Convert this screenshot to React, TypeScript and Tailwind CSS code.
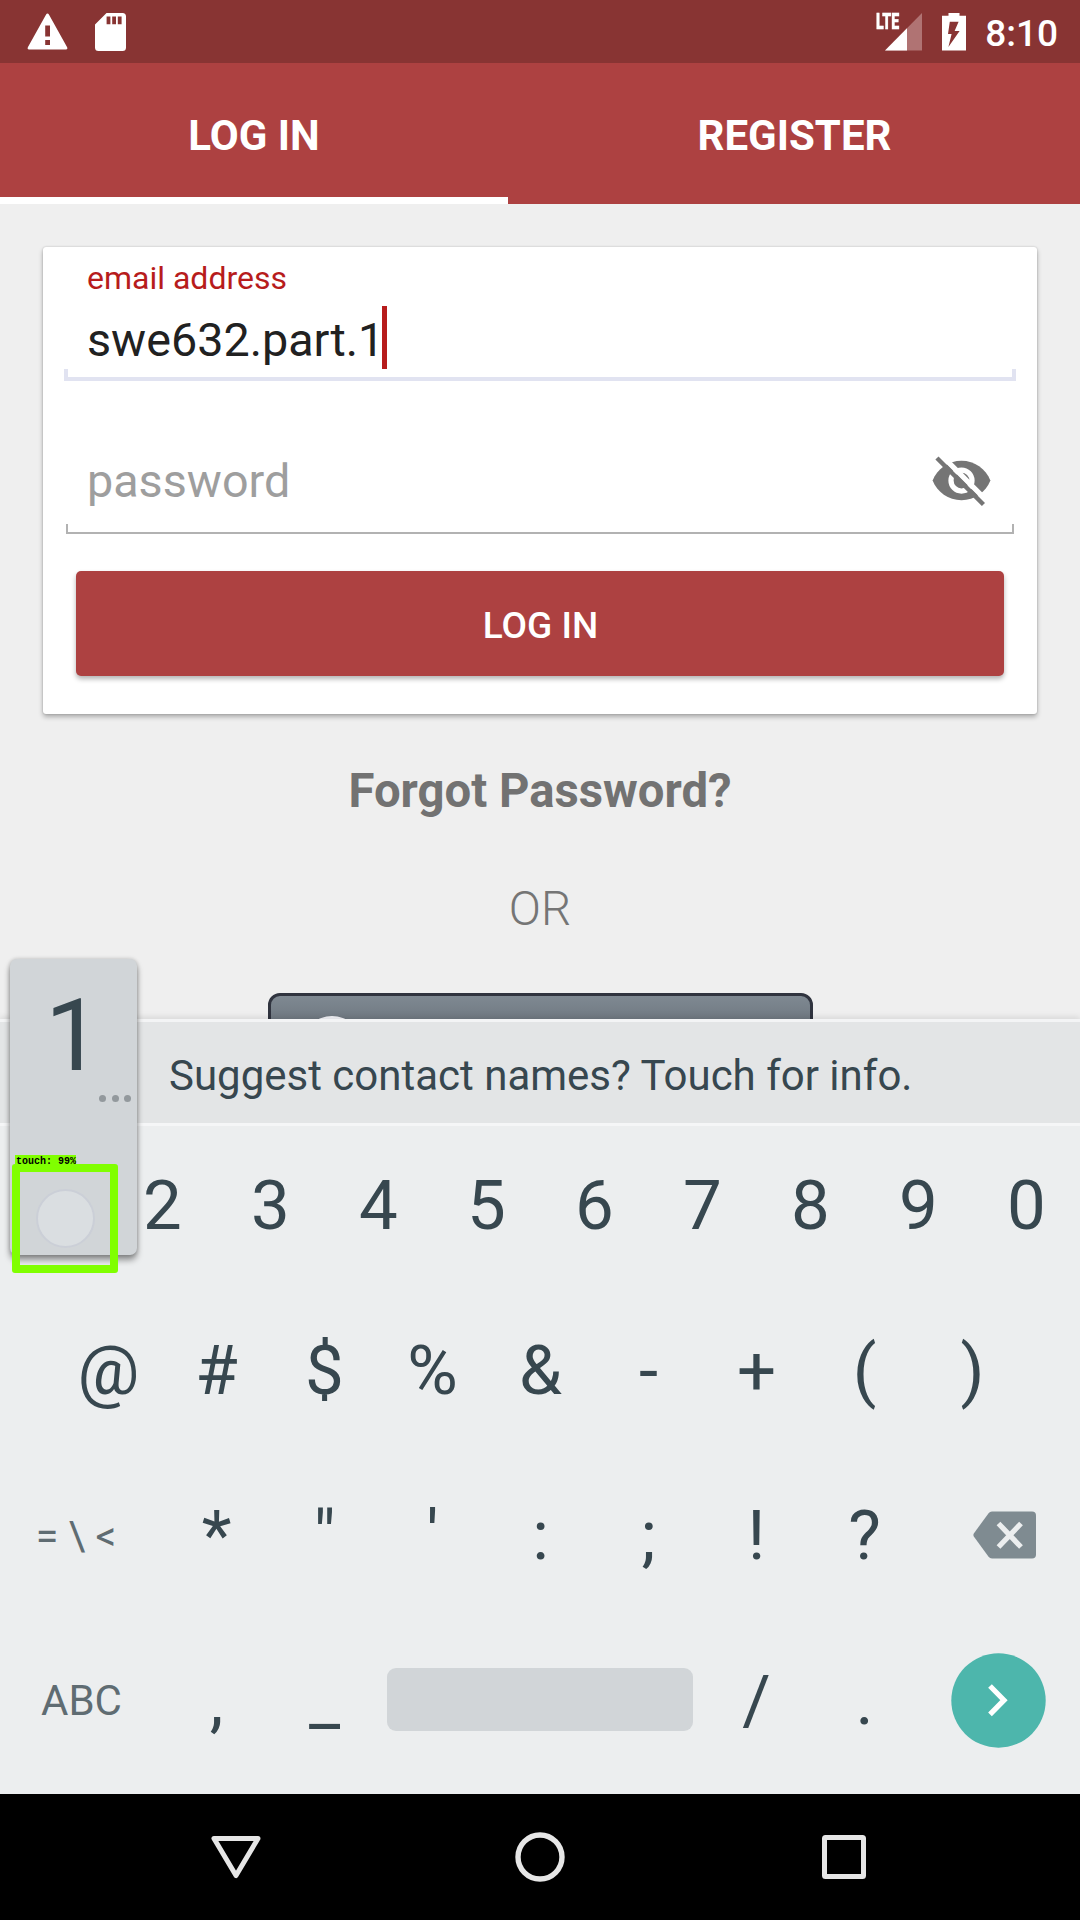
import React from "react";

const digits = ["1", "2", "3", "4", "5", "6", "7", "8", "9", "0"];
const symbols = ["@", "#", "$", "%", "&", "-", "+", "(", ")"];
const punctuation = ["*", '"', "'", ":", ";", "!", "?"];

function Key({ label }: { label: string }) {
  return (
    <button className="flex w-[108px] items-center justify-center pl-px text-[69px] leading-[80px] text-[#37474f]">
      {label}
    </button>
  );
}

function StatusBar() {
  return (
    <header className="flex h-[63px] shrink-0 items-center bg-[#883433] text-white">
      <svg className="ml-[27px] h-[37px] w-[41px]" viewBox="0 0 41 37" fill="currentColor">
        <path
          fillRule="evenodd"
          d="M20.5 .6c.6 0 1 .3 1.400 .9L40 34c.8 1.600.3 2.400-1 2.400H2C.7 36.400.2 35.600 1 34L19.100 1.500c.4-.6.8-.9 1.400-.9ZM18.200 12.500v11h4.800v-11Zm0 14.500v5h4.800v-5Z"
        />
      </svg>
      <svg className="ml-[27px] h-[38px] w-[31px]" viewBox="0 0 31 38" fill="currentColor">
        <path
          fillRule="evenodd"
          d="M11.500 0H27.500Q31 0 31 3.500V34.500Q31 38 27.500 38H3.500Q0 38 0 34.500V11.500ZM11.600 3.500v7.800h3.800V3.500Zm5.600 0v7.800h3.800V3.500Zm5.600 0v7.800h3.800V3.500Z"
        />
      </svg>
      <div className="relative ml-auto h-[38px] w-[46px]">
        <svg className="h-[38px] w-[46px]" viewBox="0 0 46 38">
          <path d="M46 0V37.500H9Z" fill="#b07373" />
          <path d="M31 15.200V37.500H9Z" fill="#fff" />
        </svg>
        <span className="absolute left-0 top-0 origin-left scale-x-[0.63] text-[22.500px] font-black leading-[17px] [-webkit-text-stroke:0.500px_white]">
          LTE
        </span>
      </div>
      <svg className="ml-[20px] h-[38px] w-[24px]" viewBox="0 0 24 38" fill="currentColor">
        <path
          fillRule="evenodd"
          d="M6.500 0h11v2.800H24V37.500H0V2.800H6.500ZM7.800 8.800L6 21h3.600L6.400 34 17.600 18h-5l4-9.200Z"
        />
      </svg>
      <span className="ml-[19px] mr-[22px] mt-[4px] text-[37px] font-medium leading-[44px]">8:10</span>
    </header>
  );
}

function Tabs() {
  return (
    <nav className="flex h-[141px] shrink-0 bg-[#ad4141] text-[42px] font-bold leading-[48px] text-white">
      <button className="flex w-[508px] items-center justify-center border-b-[7px] border-white pt-[11px]">
        LOG IN
      </button>
      <button className="flex w-[572px] items-center justify-center pl-px pt-[4px]">REGISTER</button>
    </nav>
  );
}

function HiddenEye() {
  return (
    <svg className="h-[63px] w-[63px]" viewBox="0 0 24 24">
      <mask id="eye-cut">
        <rect width="24" height="24" fill="#fff" />
        <circle cx="12" cy="12" r="4" fill="none" stroke="#000" strokeWidth="2" />
        <path d="M2.900 .95L23 21.050" stroke="#000" strokeWidth="2" />
      </mask>
      <path
        mask="url(#eye-cut)"
        fill="#757575"
        d="M12 4.500C7 4.500 2.730 7.610 1 12c1.730 4.390 6 7.500 11 7.500s9.270-3.110 11-7.500c-1.730-4.390-6-7.500-11-7.500z"
      />
      <path d="M2.640 3.440L20.360 21.160" stroke="#757575" strokeWidth="1.700" />
    </svg>
  );
}

function LoginCard() {
  return (
    <section className="mx-[43px] mt-[43px] h-[467px] shrink-0 rounded-[3px] bg-white px-[21px] pt-[13px] shadow-[0_0_2px_rgba(0,0,0,0.22),0_3px_5px_rgba(0,0,0,0.28)]">
      <label className="block pl-[23px] text-[32px] leading-[36px] text-[#b71c1c]">email address</label>
      <div className="mt-[10px] flex h-[63px] items-center pl-[23px]">
        <span className="w-[295px] whitespace-nowrap pt-[5px] text-[46.700px] leading-[56px] text-[#212121]">
          swe632.part.1
        </span>
        <span className="h-[63px] w-[5px] bg-[#b71c1c]" />
      </div>
      <div className="h-[12px] border-x-4 border-b-4 border-[#e1e3f1]" />
      <div className="mt-[55px] flex h-[88px] items-center justify-between pl-[23px] pr-[23px]">
        <span className="pt-[2px] text-[46.700px] leading-[56px] text-[#9e9e9e]">password</span>
        <HiddenEye />
      </div>
      <div className="mx-[2px] h-[10px] border-x-2 border-b-2 border-[#b2b2b2]" />
      <button className="mx-[12px] mt-[37px] flex h-[105px] w-[928px] items-center justify-center rounded-[5px] bg-[#ad4141] pl-px pt-[5px] text-[37px] font-medium leading-[44px] text-white shadow-[0_3px_5px_rgba(0,0,0,0.3)]">
        LOG IN
      </button>
    </section>
  );
}

function SocialButton() {
  return (
    <div className="mx-auto mt-[56px] h-[120px] w-[545px] shrink-0 overflow-hidden rounded-[12px] border-[3px] border-[#30343f] bg-linear-to-b from-[#7f8992] to-[#3b4148]">
      <div className="ml-[31px] mt-[20px] h-[60px] w-[60px] rounded-full bg-[#f3f4f8]" />
    </div>
  );
}

function KeyPopup() {
  return (
    <div className="absolute left-[10px] top-[959px] h-[296px] w-[127px] rounded-[7px] bg-[#d1d5d8] shadow-[0_5px_6px_rgba(0,0,0,0.4),0_0_4px_rgba(0,0,0,0.2)]">
      <div className="pt-[18px] text-center text-[101px] leading-[118px] text-[#37474f]">1</div>
      <div className="mr-[6px] flex justify-end gap-[5.500px]">
        <span className="h-[7px] w-[7px] rounded-full bg-[#93999d]" />
        <span className="h-[7px] w-[7px] rounded-full bg-[#93999d]" />
        <span className="h-[7px] w-[7px] rounded-full bg-[#93999d]" />
      </div>
    </div>
  );
}

function TouchMarker() {
  return (
    <div className="absolute left-[12px] top-[1155px] w-[106px]">
      <div className="ml-[3px] h-[10px] w-[61px] whitespace-pre bg-[#80ff00] pl-px font-['Liberation_Mono',monospace] text-[10px] font-bold leading-[14px] text-black">
        touch: 99%
      </div>
      <div className="-mt-px flex h-[109px] items-center justify-center rounded-[3px] border-[8px] border-[#80ff00]">
        <span className="h-[59px] w-[59px] rounded-full border-2 border-[#cbcfd7] bg-[#dadee1]" />
      </div>
    </div>
  );
}

function Keyboard() {
  return (
    <section className="flex h-[775px] shrink-0 flex-col bg-[#eceeef] shadow-[0_-2px_6px_rgba(0,0,0,0.1)]">
      <div className="flex h-[107px] items-center border-t-[3px] border-b-[3px] border-t-[#f3f4f5] border-b-[#f5f6f7] bg-[#e3e5e6] pl-[169px] pt-[6px] text-[42px] leading-[50px] text-[#37474f]">
        Suggest contact names? Touch for info.
      </div>
      <div className="flex h-[162px] pb-[2px]">
        {digits.map((k) => (
          <Key key={k} label={k} />
        ))}
      </div>
      <div className="flex h-[165px] justify-center">
        {symbols.map((k) => (
          <Key key={k} label={k} />
        ))}
      </div>
      <div className="flex h-[165px]">
        <button className="flex w-[162px] items-center justify-center whitespace-pre pr-[10px] text-[41px] leading-[50px] text-[#5f6c72]">
          {"= \\ <"}
        </button>
        {punctuation.map((k) => (
          <Key key={k} label={k} />
        ))}
        <button className="flex w-[162px] items-center pb-[2px] pl-[55px]">
          <svg className="h-[48px] w-[63px]" viewBox="0 0 63 48">
            <path
              d="M19 .5H59Q63 .5 63 4.500V43.500Q63 47.500 59 47.500H19Q16.800 47.500 15.400 45.600L.8 25.500Q0 24 .8 22.500L15.400 2.400Q16.800 .5 19 .5Z"
              fill="#7f8b91"
            />
            <path d="M25.500 12.500L48 36M48 12.500L25.500 36" stroke="#eceeef" strokeWidth="5.200" />
          </svg>
        </button>
      </div>
      <div className="flex h-[165px]">
        <button className="flex w-[162px] items-center justify-center pl-px text-[42px] leading-[50px] text-[#5f6c72]">
          ABC
        </button>
        <Key label="," />
        <Key label="_" />
        <div className="flex w-[324px] items-center justify-center pb-[2px]">
          <div className="h-[63px] w-[306px] rounded-[9px] bg-[#d1d5d8]" />
        </div>
        <Key label="/" />
        <Key label="." />
        <button className="flex w-[162px] items-center pb-px pl-[33px]">
          <svg className="h-[95px] w-[95px]" viewBox="0 0 95 95">
            <circle cx="47.500" cy="47.500" r="47.200" fill="#4db6ac" />
            <path d="M39 33L53 47.200L39 61.400" fill="none" stroke="#fff" strokeWidth="5.200" />
          </svg>
        </button>
      </div>
    </section>
  );
}

function NavBar() {
  return (
    <footer className="flex h-[126px] shrink-0 items-center justify-center gap-[252px] bg-black">
      <svg className="h-[52px] w-[52px]" viewBox="0 0 52 52" fill="none" stroke="#e6e6e6" strokeWidth="5" strokeLinejoin="round">
        <path d="M4 7.500H48L26 44.500Z" />
      </svg>
      <svg className="h-[52px] w-[52px]" viewBox="0 0 52 52" fill="none" stroke="#e6e6e6" strokeWidth="5.400">
        <circle cx="26" cy="26" r="22" />
      </svg>
      <svg className="h-[52px] w-[52px]" viewBox="0 0 52 52" fill="none" stroke="#e6e6e6" strokeWidth="5" strokeLinejoin="round">
        <rect x="6.500" y="6.500" width="39" height="39" rx="1" />
      </svg>
    </footer>
  );
}

export default function App() {
  return (
    <div className="relative flex h-[1920px] w-[1080px] flex-col overflow-hidden bg-[#efefef] font-['Roboto',sans-serif]">
      <StatusBar />
      <Tabs />
      <main className="flex h-[815px] shrink-0 flex-col overflow-hidden">
        <LoginCard />
        <a className="mt-[49px] text-center text-[47.300px] font-bold leading-[56px] text-[#727272]">Forgot Password?</a>
        <p className="mt-[62px] text-center text-[47.500px] font-light leading-[56px] text-[#757575]">OR</p>
        <SocialButton />
      </main>
      <Keyboard />
      <NavBar />
      <KeyPopup />
      <TouchMarker />
    </div>
  );
}
